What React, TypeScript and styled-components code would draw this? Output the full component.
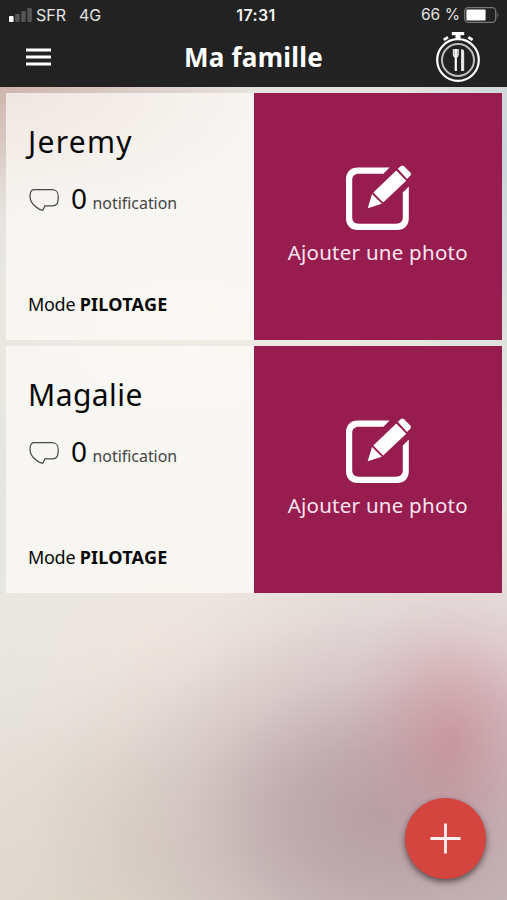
import React from "react";
import styled, { createGlobalStyle } from "styled-components";

const GlobalStyle = createGlobalStyle`
  * { box-sizing: border-box; }
  body { margin: 0; }
  button { border: 0; padding: 0; background: none; color: inherit; font: inherit; cursor: pointer; }
  svg { display: block; }
`;

const Screen = styled.div`
  position: relative;
  width: 100%;
  max-width: 507px;
  height: 900px;
  margin: 0 auto;
  overflow: hidden;
  display: flex;
  flex-direction: column;
  font-family: "Noto Sans", "Open Sans", sans-serif;
  color: #080808;
  background:
    radial-gradient(ellipse 110px 150px at 450px 740px, rgba(200, 130, 138, 0.5), rgba(202, 135, 145, 0.34) 30%, rgba(204, 140, 150, 0.12) 65%, rgba(204, 140, 150, 0) 100%),
    radial-gradient(ellipse 340px 250px at 375px 815px, rgba(176, 150, 156, 0.8) 0%, rgba(180, 154, 160, 0.7) 25%, rgba(195, 170, 175, 0.4) 55%, rgba(208, 186, 188, 0.14) 80%, rgba(215, 195, 195, 0) 100%),
    radial-gradient(ellipse 360px 240px at 507px 900px, rgba(188, 172, 180, 0.7), rgba(190, 174, 182, 0.3) 55%, rgba(190, 174, 182, 0) 100%),
    radial-gradient(ellipse 190px 220px at 130px 860px, rgba(212, 198, 184, 0.5), rgba(216, 202, 188, 0.2) 55%, rgba(216, 202, 188, 0) 100%),
    radial-gradient(ellipse 330px 210px at 507px 710px, rgba(224, 186, 196, 0.7), rgba(224, 190, 198, 0.3) 50%, rgba(224, 190, 198, 0) 100%),
    radial-gradient(ellipse 260px 130px at 0px 85px, rgba(203, 174, 165, 0.9), rgba(214, 185, 178, 0) 100%),
    radial-gradient(ellipse 120px 260px at 507px 150px, rgba(196, 211, 216, 0.8), rgba(196, 211, 216, 0) 100%),
    radial-gradient(ellipse 260px 160px at 190px 340px, rgba(242, 238, 230, 0.9), rgba(242, 238, 230, 0) 100%),
    radial-gradient(ellipse 200px 130px at 165px 640px, rgba(240, 229, 222, 0.9), rgba(240, 229, 222, 0) 100%),
    linear-gradient(#e8e4df 0, #e5e5df 340px, #e7e7e1 640px, #e6e1da 750px, #dfdcd1 900px);
`;

const Header = styled.header`
  flex: none;
  height: 87px;
  background: #222222;
  color: #ffffff;
`;

const StatusBar = styled.div`
  display: grid;
  grid-template-columns: 1fr auto 1fr;
  align-items: center;
  height: 30px;
  padding: 0 7px 0 9px;
  font: 16px/20px Inter, "Liberation Sans", sans-serif;
  color: #e2e2e2;
`;

const Carrier = styled.div`
  display: flex;
  align-items: center;
  gap: 4px;
`;

const Network = styled.span`
  margin-left: 9px;
`;

const Clock = styled.div`
  padding-left: 3px;
  font-weight: 600;
  font-size: 16px;
  letter-spacing: 0.4px;
  color: #f2f2f2;
`;

const Power = styled.div`
  display: flex;
  align-items: center;
  justify-content: flex-end;
  gap: 4px;
  font-size: 15.6px;
  white-space: nowrap;
`;

const TitleBar = styled.div`
  display: grid;
  grid-template-columns: 1fr auto 1fr;
  align-items: center;
  height: 54px;
  padding: 0 26px;
`;

const Title = styled.h1`
  margin: 0;
  font-size: 26px;
  line-height: 34px;
  font-weight: 700;
  letter-spacing: 0.25px;
`;

const MenuButton = styled.button`
  justify-self: start;
`;

const TimerButton = styled.button`
  justify-self: end;
`;

const Members = styled.main`
  display: flex;
  flex-direction: column;
  gap: 5.5px;
  padding: 6px 5.5px 0 6px;
`;

const Card = styled.article`
  display: grid;
  grid-template-columns: 248px 1fr;
  height: 247px;
`;

const Info = styled.section`
  display: flex;
  flex-direction: column;
  padding: 28px 22px 23px;
  background: rgba(255, 254, 250, 0.67);
`;

const Name = styled.h2<{ $tracking: number }>`
  margin: 0;
  font-size: 30px;
  line-height: 42px;
  font-weight: 400;
  letter-spacing: ${({ $tracking }) => $tracking}px;
  white-space: nowrap;
`;

const Notifications = styled.div`
  display: flex;
  align-items: baseline;
  height: 36px;
  margin-top: 18px;
  line-height: 35px;
`;

const BubbleIcon = styled.svg`
  flex: none;
  align-self: center;
  margin: 2px 11px 0 1px;
`;

const Count = styled.span`
  width: 21.5px;
  font-size: 28px;
`;

const CountLabel = styled.span`
  font-size: 15.9px;
  color: #444444;
`;

const Mode = styled.p`
  margin: auto 0 0;
  font-size: 18px;
  line-height: 26px;
  letter-spacing: -0.3px;
  white-space: nowrap;

  strong {
    font-weight: 700;
    letter-spacing: 0.25px;
  }
`;

const PhotoButton = styled.button`
  display: flex;
  flex-direction: column;
  align-items: center;
  justify-content: flex-start;
  padding-top: 72px;
  background: #971d4f;
  color: #fbe5ef;
`;

const PhotoLabel = styled.span`
  margin-top: 4px;
  font-size: 20.5px;
  line-height: 30px;
  letter-spacing: 0.25px;
  white-space: nowrap;
`;

const AddButton = styled.button`
  position: absolute;
  right: 21.5px;
  bottom: 21.5px;
  display: grid;
  place-items: center;
  width: 81px;
  height: 81px;
  border-radius: 50%;
  background: #d3453e;
  box-shadow: 0 3px 6px rgba(40, 25, 25, 0.65);
`;

const SignalIcon = () => (
  <svg width="23" height="14" viewBox="0 0 23 14">
    <rect x="0" y="8" width="4.6" height="6" rx="1" fill="#fff" />
    <rect x="6.1" y="6" width="4.6" height="8" rx="1" fill="#545454" />
    <rect x="12.2" y="3" width="4.6" height="11" rx="1" fill="#545454" />
    <rect x="18.3" y="0" width="4.6" height="14" rx="1" fill="#545454" />
  </svg>
);

const BatteryIcon = () => (
  <svg width="36" height="16" viewBox="0 0 36 16">
    <rect x="0.7" y="0.7" width="31" height="14.6" rx="3.5" fill="none" stroke="#777" strokeWidth="1.3" />
    <rect x="2.4" y="2.6" width="19.2" height="10.8" rx="1" fill="#fff" />
    <path d="M33.4 5.5q2 2.5 0 5z" fill="#777" />
  </svg>
);

const MenuIcon = () => (
  <svg width="25" height="18" viewBox="0 0 25 18">
    <path d="M0 2h25M0 9h25M0 16h25" stroke="#fff" strokeWidth="2.8" />
  </svg>
);

const TimerIcon = () => (
  <svg width="46" height="52" viewBox="0 0 46 52" fill="none" stroke="#fff">
    <circle cx="23" cy="29" r="20.8" strokeWidth="2.2" />
    <circle cx="23" cy="29" r="16" strokeWidth="2" stroke="#bdbdbd" />
    <path d="M16.8 2.6h12.4" strokeWidth="3.2" />
    <path d="M23 3v5" strokeWidth="5" />
    <path d="M8.7 8.9l4.3-2.6M37.6 8.9l-4.3-2.6" strokeWidth="2.8" />
    <path d="M18.4 18v5.5q0 2.5 2.4 2.5t2.4-2.5V18" fill="#a6a6a6" stroke="#dedede" strokeWidth="1.2" />
    <path d="M20.8 18v22" strokeWidth="2.2" />
    <path d="M26 18q3.2 0 3.2 4v18H26z" fill="#c5c5c5" stroke="none" />
    <path d="M27.6 19v21" strokeWidth="2" stroke="#eee" />
  </svg>
);

const Bubble = () => (
  <BubbleIcon width="31" height="24" viewBox="0 0 31 24">
    <path
      d="M4.8 1.5H22.5C27.5 1.5 29.2 3.5 29.2 8.8C29.2 15.6 28 17.8 23 17.8H15.8C15 20 14.8 21.5 13.5 22.3C11.5 22.3 1 17 1 8.5C1 4.5 1.8 1.5 4.8 1.5Z"
      fill="none"
      stroke="#484848"
      strokeWidth="1.25"
    />
  </BubbleIcon>
);

const EditIcon = () => (
  <svg width="66" height="68" viewBox="0 0 66 68" fill="#fff">
    <path d="M44.6 2.6H13C5.5 2.6 1 7.2 1 14.5V53C1 60.5 5.5 65 13 65H52C59.5 65 63.8 60.5 63.8 53V21.5L57.8 27.5V52C57.8 56.5 55.5 58.7 51 58.7H14C9.5 58.7 7.2 56.5 7.2 52V15.5C7.2 11 9.5 8.8 14 8.8H38.4Z" />
    <path d="M52.8 3.8L56 .9Q57.5 0 59 1.2L65.3 7.6Q66.6 9.2 65.2 10.8L62 14Z" />
    <path d="M51.3 5.4L61.2 15.7L38.2 37.6L28.3 27.4Z" />
    <path d="M27 29.1L36.8 38.8L22.7 43.3Z" />
  </svg>
);

const PlusIcon = () => (
  <svg width="31" height="31" viewBox="0 0 31 31">
    <path d="M15.5 .5v30M.5 15.5h30" stroke="#fff0ef" strokeWidth="2.8" />
  </svg>
);

const members = [
  { name: "Jeremy", tracking: 1.3, notifications: 0, mode: "PILOTAGE" },
  { name: "Magalie", tracking: 0.45, notifications: 0, mode: "PILOTAGE" },
];

export default function App() {
  return (
    <>
      <GlobalStyle />
      <Screen>
        <Header>
          <StatusBar>
            <Carrier>
              <SignalIcon />
              <span>SFR</span>
              <Network>4G</Network>
            </Carrier>
            <Clock>17:31</Clock>
            <Power>
              66 %
              <BatteryIcon />
            </Power>
          </StatusBar>
          <TitleBar>
            <MenuButton aria-label="Menu"><MenuIcon /></MenuButton>
            <Title>Ma famille</Title>
            <TimerButton aria-label="Repas"><TimerIcon /></TimerButton>
          </TitleBar>
        </Header>
        <Members>
          {members.map((member) => (
            <Card key={member.name}>
              <Info>
                <Name $tracking={member.tracking}>{member.name}</Name>
                <Notifications>
                  <Bubble />
                  <Count>{member.notifications}</Count>
                  <CountLabel>notification</CountLabel>
                </Notifications>
                <Mode>Mode <strong>{member.mode}</strong></Mode>
              </Info>
              <PhotoButton>
                <EditIcon />
                <PhotoLabel>Ajouter une photo</PhotoLabel>
              </PhotoButton>
            </Card>
          ))}
        </Members>
        <AddButton aria-label="Ajouter"><PlusIcon /></AddButton>
      </Screen>
    </>
  );
}
